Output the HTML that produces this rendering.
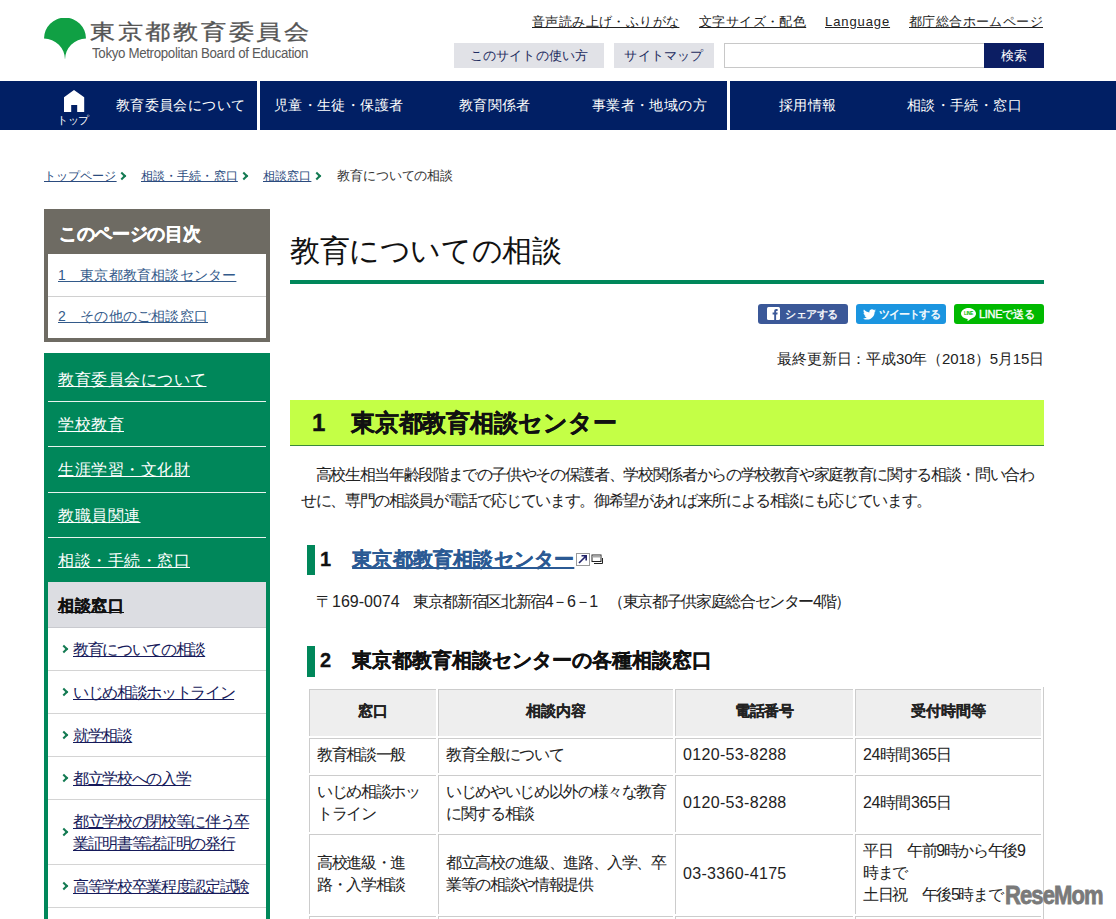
<!DOCTYPE html>
<html lang="ja"><head><meta charset="utf-8">
<style>
*{box-sizing:border-box;margin:0;padding:0}
html,body{width:1116px;height:919px;overflow:hidden;background:#fff}
body{position:relative;font-family:"Liberation Sans",sans-serif;color:#222;font-size:15px;letter-spacing:-0.35px;line-height:1.5}
.abs{position:absolute;white-space:nowrap}
a{color:inherit}
/* header */
#logo{left:44px;top:18px}
#ttl{left:90px;top:19px;font-size:25px;letter-spacing:2.2px;color:#555;line-height:30px;transform:scale(1.02,0.85);transform-origin:0 0;-webkit-text-stroke:0.35px #555}
#sub{left:92px;top:45px;font-size:14px;color:#5a5a5a;line-height:16px;transform:scaleX(0.95);transform-origin:0 0}
.tl{top:12px;font-size:13px;letter-spacing:0.4px;text-underline-offset:1px;color:#222;line-height:20px;text-decoration:underline}
.hbtn{top:43px;height:25px;background:#e1e2e7;color:#1d2b60;font-size:13px;letter-spacing:0.2px;line-height:25px;text-align:center}
#srch{left:724px;top:43px;width:261px;height:25px;border:1px solid #c8c8c8;background:#fff}
#sbtn{left:984px;top:43px;width:60px;height:25px;background:#0c1e63;color:#fff;font-size:13px;letter-spacing:0.4px;line-height:25px;text-align:center}
/* nav */
#nav{left:0;top:81px;width:1116px;height:49px;background:#011f64}
.div{top:81px;height:49px;width:3px;background:#fff}
.ni{top:95px;color:#fff;font-size:14px;letter-spacing:0.36px;line-height:20px}
/* breadcrumb */
.bc{top:167px;font-size:12px;letter-spacing:0.1px;line-height:18px;color:#2b4b7e;text-decoration:underline}
.chev{position:absolute;width:6px;height:6px;border-right:2.4px solid #137a52;border-top:2.4px solid #137a52;transform:rotate(45deg)}
/* toc */
#toc{left:44px;top:209px;width:226px;height:133px;border:4px solid #6e6b63;border-top:0;background:#fff}
#toch{left:44px;top:209px;width:226px;height:45px;background:#6e6b63;color:#fff;font-weight:bold;font-size:18px;line-height:45px;padding-left:15px;padding-top:3px;-webkit-text-stroke:0.4px #fff}
.tocl{left:58px;font-size:14px;letter-spacing:0.2px;color:#335a8a;text-decoration:underline;line-height:20px}
/* side nav */
#snav{left:44px;top:353px;width:226px;height:600px;border:4px solid #00875a;border-top:0;background:#fff}
#snavtop{left:44px;top:353px;width:226px;height:229px;background:#00875a}
.sl{left:48px;width:218px;height:1px;background:#e8f3ee}
.si{left:58px;color:#fff;font-size:16px;letter-spacing:0.5px;line-height:22px;text-decoration:underline}
#sact{left:48px;top:582px;width:218px;height:46px;background:#dcdde2;border-bottom:1px solid #c9cacf}
.ssl{left:48px;width:218px;height:1px;background:#d4d4d4}
.ssi{left:73px;color:#15195a;font-size:16px;letter-spacing:-1.35px;line-height:22px;text-decoration:underline}

/* main */
#h1{left:290px;top:231px;font-size:30px;letter-spacing:-0.4px;line-height:40px;color:#111}
#h1rule{left:290px;top:280px;width:754px;height:4px;background:#00875a}
.sb{top:304px;height:20px;width:90px;border-radius:3px;color:#fff;font-size:11px;line-height:20px}
.st{position:absolute;top:0;font-weight:normal;letter-spacing:-0.4px;-webkit-text-stroke-width:0.35px}
#upd{right:72px;top:348px;font-size:15px;letter-spacing:-0.15px;line-height:22px;color:#222}
#h2{left:290px;top:400px;width:754px;height:46px;background:#c4ff46;border-bottom:1px solid #3a8a3a;font-weight:bold;font-size:24px;letter-spacing:-0.1px;line-height:45px;-webkit-text-stroke-width:0.4px;padding-left:312px;color:#111}
.p{left:301px;font-size:16px;letter-spacing:-1.35px;line-height:22px;color:#222}
.h3bar{left:307px;width:8px;background:#00875a}
.h3{left:320px;font-size:20px;letter-spacing:0;line-height:28px;font-weight:bold;color:#111;-webkit-text-stroke-width:0.3px}
#tbl{position:absolute;left:307px;top:687px;table-layout:fixed;width:737px;border-collapse:separate;border-spacing:2px;border-right:1px solid #ccc;border-bottom:1px solid #ccc;font-size:16px;letter-spacing:-1.35px;line-height:22px;color:#222}
#tbl td,#tbl th{border-top:1px solid #ccc;border-left:1px solid #ccc;padding:5px 6px 7px 7px;vertical-align:middle;text-align:left;white-space:nowrap}
#tbl th{background:#eee;text-align:center;font-weight:bold;padding:10px 6px 14px;font-size:15px;letter-spacing:-0.2px;-webkit-text-stroke-width:0.2px}
.ph{letter-spacing:0.33px}
.hr{letter-spacing:-0.45px}
#wm{left:1005px;top:880px;font-size:25px;font-weight:bold;color:#7a7a7a;line-height:30px;letter-spacing:-1px;transform:scaleX(0.88);transform-origin:0 0;-webkit-text-stroke:0.8px #7a7a7a}
</style></head><body>

<!-- header -->
<svg class="abs" id="logo" width="42" height="42" viewBox="0 0 42 42"><path d="M0,20.6 A21,21 0 0 1 42,20.6 A21,21 0 0 0 21,41.6 A21,21 0 0 0 0,20.6 Z" fill="#10a044"/></svg>
<div class="abs" id="ttl">東京都教育委員会</div>
<div class="abs" id="sub">Tokyo Metropolitan Board of Education</div>

<a class="abs tl" style="left:532px">音声読み上げ・ふりがな</a>
<a class="abs tl" style="left:699px">文字サイズ・配色</a>
<a class="abs tl" style="left:825px;letter-spacing:0.9px">Language</a>
<a class="abs tl" style="left:909px">都庁総合ホームページ</a>
<div class="abs hbtn" style="left:454px;width:150px">このサイトの使い方</div>
<div class="abs hbtn" style="left:614px;width:100px">サイトマップ</div>
<div class="abs" id="srch"></div>
<div class="abs" id="sbtn">検索</div>

<!-- nav -->
<div class="abs" id="nav"></div>
<div class="abs div" style="left:257px"></div>
<div class="abs div" style="left:727px"></div>
<svg class="abs" style="left:64px;top:90px" width="21" height="22" viewBox="0 0 21 22"><path d="M10,0 L20.2,7.2 V22 H13.2 V15 H7.2 V22 H0 V7.2 Z" fill="#fff"/></svg>
<div class="abs" style="left:57px;top:113px;color:#fff;font-size:11px;letter-spacing:-0.3px;line-height:14px">トップ</div>
<div class="abs ni" style="left:116px">教育委員会について</div>
<div class="abs ni" style="left:274px">児童・生徒・保護者</div>
<div class="abs ni" style="left:459px">教育関係者</div>
<div class="abs ni" style="left:592px">事業者・地域の方</div>
<div class="abs ni" style="left:779px">採用情報</div>
<div class="abs ni" style="left:907px">相談・手続・窓口</div>

<!-- breadcrumb -->
<a class="abs bc" style="left:44px">トップページ</a><span class="chev" style="left:119px;top:173px"></span>
<a class="abs bc" style="left:141px">相談・手続・窓口</a><span class="chev" style="left:241px;top:173px"></span>
<a class="abs bc" style="left:263px">相談窓口</a><span class="chev" style="left:314px;top:173px"></span>
<div class="abs" style="left:337px;top:167px;font-size:13px;letter-spacing:-0.1px;line-height:18px;color:#333">教育についての相談</div>

<!-- toc -->
<div class="abs" id="toc"></div>
<div class="abs" id="toch">このページの目次</div>
<a class="abs tocl" style="top:265px">1　東京都教育相談センター</a>
<div class="abs" style="left:48px;top:296px;width:218px;height:1px;background:#d0d0d0"></div>
<a class="abs tocl" style="top:306px">2　その他のご相談窓口</a>

<!-- side nav -->
<div class="abs" id="snav"></div>
<div class="abs" id="snavtop"></div>
<a class="abs si" style="top:369px">教育委員会について</a>
<div class="abs sl" style="top:401px"></div>
<a class="abs si" style="top:414px">学校教育</a>
<div class="abs sl" style="top:446px"></div>
<a class="abs si" style="top:459px">生涯学習・文化財</a>
<div class="abs sl" style="top:492px"></div>
<a class="abs si" style="top:505px">教職員関連</a>
<div class="abs sl" style="top:537px"></div>
<a class="abs si" style="top:550px">相談・手続・窓口</a>
<div class="abs" id="sact"></div>
<a class="abs si" style="top:595px;color:#111;font-weight:bold;-webkit-text-stroke:0.3px #111">相談窓口</a>


<div class="abs" style="left:48px;top:627px;width:218px;height:1px;background:#c9cacf"></div>
<span class="chev" style="left:61px;top:646px"></span><a class="abs ssi" style="top:639px">教育についての相談</a>
<div class="abs ssl" style="top:670px"></div>
<span class="chev" style="left:61px;top:689px"></span><a class="abs ssi" style="top:682px">いじめ相談ホットライン</a>
<div class="abs ssl" style="top:713px"></div>
<span class="chev" style="left:61px;top:732px"></span><a class="abs ssi" style="top:725px">就学相談</a>
<div class="abs ssl" style="top:756px"></div>
<span class="chev" style="left:61px;top:775px"></span><a class="abs ssi" style="top:768px">都立学校への入学</a>
<div class="abs ssl" style="top:799px"></div>
<span class="chev" style="left:61px;top:829px"></span><a class="abs ssi" style="top:811px;line-height:21.5px">都立学校の閉校等に伴う卒<br>業証明書等諸証明の発行</a>
<div class="abs ssl" style="top:864px"></div>
<span class="chev" style="left:61px;top:883px"></span><a class="abs ssi" style="top:876px">高等学校卒業程度認定試験</a>
<div class="abs ssl" style="top:907px"></div>

<!-- main -->
<div class="abs" id="h1">教育についての相談</div>
<div class="abs" id="h1rule"></div>
<div class="abs sb" style="left:758px;background:#3b5898"><svg style="position:absolute;left:9px;top:3px" width="13" height="13" viewBox="0 0 13 13"><rect width="13" height="13" rx="1.5" fill="#fff"/><path d="M7.2,13 V7.6 H5.6 V5.6 H7.2 V4.2 C7.2,2.8 8,2 9.3,2 H10.6 V3.9 H9.8 C9.2,3.9 9.1,4.2 9.1,4.6 V5.6 H10.6 L10.4,7.6 H9.1 V13 Z" fill="#3b5898"/></svg><span class="st" style="left:27px">シェアする</span></div>
<div class="abs sb" style="left:856px;background:#1b95e0"><svg style="position:absolute;left:7px;top:5px" width="13" height="11" viewBox="0 0 24 20"><path d="M24,2.4 C23.1,2.8 22.2,3 21.2,3.2 C22.2,2.6 23,1.6 23.4,0.5 C22.4,1.1 21.3,1.5 20.2,1.7 C19.3,0.7 18,0.1 16.6,0.1 C13.9,0.1 11.7,2.3 11.7,5 C11.7,5.4 11.7,5.8 11.8,6.1 C7.7,5.9 4.1,3.9 1.7,0.9 C1.2,1.7 1,2.5 1,3.4 C1,5.1 1.9,6.6 3.2,7.5 C2.4,7.5 1.6,7.2 1,6.9 C1,9.3 2.7,11.3 4.9,11.7 C4.5,11.8 4.1,11.9 3.6,11.9 C3.3,11.9 3,11.9 2.7,11.8 C3.3,13.8 5.1,15.2 7.3,15.2 C5.6,16.5 3.5,17.3 1.2,17.3 C0.8,17.3 0.4,17.3 0,17.2 C2.2,18.6 4.8,19.4 7.5,19.4 C16.6,19.4 21.5,11.9 21.5,5.4 L21.5,4.8 C22.5,4.1 23.3,3.3 24,2.4 Z" fill="#fff"/></svg><span class="st" style="left:23px;letter-spacing:-0.9px">ツイートする</span></div>
<div class="abs sb" style="left:954px;background:#00b900"><svg style="position:absolute;left:7px;top:4px" width="15" height="13" viewBox="0 0 15 13"><path d="M7.5,0 C11.6,0 15,2.5 15,5.6 C15,8.2 12.6,10.3 9.6,10.9 C8.8,11.7 7.4,12.6 6.4,13 L6.7,11.1 C2.9,10.7 0,8.4 0,5.6 C0,2.5 3.4,0 7.5,0 Z" fill="#fff"/><text x="7.5" y="7.3" font-size="4.6" font-family="Liberation Sans" font-weight="bold" text-anchor="middle" fill="#00b900">LINE</text></svg><span class="st" style="left:25px;letter-spacing:-0.3px">LINEで送る</span></div>
<div class="abs" id="upd">最終更新日：平成30年（2018）5月15日</div>
<div class="abs" id="h2" style="padding-left:22px">1<span style="display:inline-block;width:25.5px"></span>東京都教育相談センター</div>
<div class="abs p" style="top:464px">　高校生相当年齢段階までの子供やその保護者、学校関係者からの学校教育や家庭教育に関する相談・問い合わ</div>
<div class="abs p" style="top:490px">せに、専門の相談員が電話で応じています。御希望があれば来所による相談にも応じています。</div>
<div class="abs h3bar" style="top:545px;height:30px"></div>
<div class="abs h3" style="top:545px">1<span style="display:inline-block;width:21px"></span><a style="color:#2b5a94;text-decoration:underline;letter-spacing:0.2px">東京都教育相談センター</a></div>
<svg class="abs" style="left:576px;top:553px" width="28" height="13" viewBox="0 0 28 13"><rect x="0.5" y="0.5" width="13" height="12" fill="#fff" stroke="#999"/><path d="M3,10 L10,3 M5.5,2.8 H10.2 V7.5" stroke="#23246a" stroke-width="1.6" fill="none"/><rect x="16" y="2" width="9" height="6.5" fill="#fff" stroke="#222" stroke-width="1"/><rect x="16.5" y="2.5" width="8" height="2" fill="#aaa"/><path d="M18,10.5 H26.5 V5" stroke="#222" stroke-width="1" fill="none"/></svg>
<div class="abs p" style="left:316px;top:591px;letter-spacing:0">〒169-0074</div><div class="abs p" style="left:413px;top:591px">東京都新宿区北新宿4－6－1</div><div class="abs p" style="left:608px;top:591px">（東京都子供家庭総合センター4階）</div>
<div class="abs h3bar" style="top:646px;height:31px"></div>
<div class="abs h3" style="top:646px">2<span style="display:inline-block;width:21px"></span>東京都教育相談センターの各種相談窓口</div>
<table id="tbl">
<tr><th style="width:127px">窓口</th><th style="width:235px">相談内容</th><th style="width:178px">電話番号</th><th style="width:186px">受付時間等</th></tr>
<tr><td>教育相談一般</td><td>教育全般について</td><td class="ph">0120-53-8288</td><td class="hr">24時間365日</td></tr>
<tr><td>いじめ相談ホッ<br>トライン</td><td>いじめやいじめ以外の様々な教育<br>に関する相談</td><td class="ph">0120-53-8288</td><td class="hr">24時間365日</td></tr>
<tr><td>高校進級・進<br>路・入学相談</td><td>都立高校の進級、進路、入学、卒<br>業等の相談や情報提供</td><td class="ph">03-3360-4175</td><td style="padding-bottom:8px">平日　午前9時から午後9<br>時まで<br>土日祝　午後5時まで</td></tr>
<tr><td>&nbsp;</td><td>&nbsp;</td><td>&nbsp;</td><td>&nbsp;</td></tr>
</table>
<div class="abs" id="wm">ReseMom</div>
</body></html>
